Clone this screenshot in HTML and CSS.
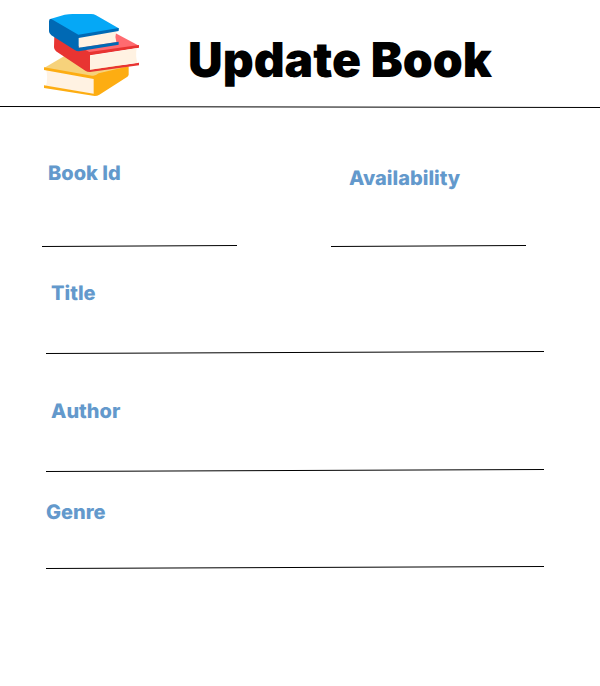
FILE: index.html
```html
<!DOCTYPE html>
<html lang="en">
<head>
<meta charset="utf-8">
<meta name="viewport" content="width=device-width, initial-scale=1">
<title>Update Book</title>
<link rel="stylesheet" href="styles.css">
</head>
<body>
<header class="header">
  <svg class="logo" viewBox="24 24 288 246" aria-hidden="true">
    <path fill="#f6d27b" d="M24 186 84 151 180 158 278 182 172 213Z"/>
    <path fill="#fff2e2" d="M30 190 174 217V264L30 240Q37 214 30 190Z"/>
    <path fill="#fdad12" d="M24 184 168 209Q178 211 188 202L278 181V206Q277 211 272 214L190 266Q184 270 176 270L24 246V238L173 263V219L24 192Z"/>
    <path fill="#ff6b70" d="M236 80 309 119 160 142 130 130Z"/>
    <path fill="#e83432" d="M55 88 60 84 160 138 309 117V125L162 148V191L309 170V178L162 198Q154 198 148 194L60 136Q54 131 54 124Z"/>
    <path fill="#fff2e2" d="M162 149 302 127Q298 150 304 170L162 191Z"/>
    <path fill="#fff2e2" d="M128 95 241 75Q236 92 241 108L128 126Z"/>
    <path fill="#05a8f6" d="M40 40 86 26Q98 24 110 24H165Q174 24 180 28L248 67V71L128 92Z"/>
    <path fill="#0069b4" d="M39 46Q39 38 46 39L127 86 248 66V75L128 96V125L248 107V116L128 136Q122 136 116 132L46 88Q39 83 39 76Z"/>
  </svg>
  <h1 class="title">Update Book</h1>
</header>
<svg class="rule rule-short" viewBox="0 0 600 2" preserveAspectRatio="none" aria-hidden="true"><path d="M0 .5 600 1.5"/></svg>

<form class="form">
  <div class="pair">
    <div class="field field-id">
      <label for="book-id">Book Id</label>
      <input id="book-id" type="text">
      <svg class="rule rule-short" viewBox="0 0 195 2" preserveAspectRatio="none" aria-hidden="true"><path d="M0 1.5 195 .5"/></svg>
    </div>
    <div class="field field-availability">
      <label for="availability">Availability</label>
      <input id="availability" type="text">
      <svg class="rule rule-short" viewBox="0 0 195 2" preserveAspectRatio="none" aria-hidden="true"><path d="M0 1.5 195 .5"/></svg>
    </div>
  </div>
  <div class="field field-title">
    <label for="title">Title</label>
    <input id="title" type="text">
    <svg class="rule rule-long" viewBox="0 0 498 3" preserveAspectRatio="none" aria-hidden="true"><path d="M0 2.5 498 .5"/></svg>
  </div>
  <div class="field field-author">
    <label for="author">Author</label>
    <input id="author" type="text">
    <svg class="rule rule-long" viewBox="0 0 498 3" preserveAspectRatio="none" aria-hidden="true"><path d="M0 2.5 498 .5"/></svg>
  </div>
  <div class="field field-genre">
    <label for="genre">Genre</label>
    <input id="genre" type="text">
    <svg class="rule rule-long" viewBox="0 0 498 3" preserveAspectRatio="none" aria-hidden="true"><path d="M0 2.5 498 .5"/></svg>
  </div>
</form>
</body>
</html>
```

FILE: styles.css
```css
* {
  box-sizing: border-box;
}

body {
  margin: 0;
  background: #fff;
  color: #000;
  font-family: Inter, "Liberation Sans", sans-serif;
  text-rendering: geometricPrecision;
}

.header {
  display: flex;
  align-items: flex-end;
  gap: 48px;
  padding: 14px 44px 10px;
}

.logo {
  display: block;
  flex: none;
  width: 96px;
  height: 82px;
}

.title {
  margin: 0;
  font-size: 48px;
  font-weight: 900;
  line-height: 72px;
  white-space: nowrap;
}

.rule {
  display: block;
  width: 100%;
  fill: none;
  stroke: #000;
  stroke-width: 1px;
}

.rule-short {
  height: 2px;
}

.rule-long {
  height: 3px;
}

.form {
  padding: 53px 56px 48px 42px;
}

.pair {
  display: grid;
  grid-template-columns: 1fr 1fr;
  align-items: end;
  column-gap: 94px;
  padding-right: 18px;
}

.field {
  display: flex;
  flex-direction: column;
}

.field label {
  color: #6399cc;
  font-size: 20px;
  font-weight: 800;
  line-height: 24px;
}

.field input {
  width: 100%;
  height: 46px;
  padding: 0 6px;
  border: 0;
  outline: 0;
  background: transparent;
  font: inherit;
  font-size: 16px;
}

.field-id label {
  padding-left: 6px;
}

.field-id input {
  height: 60px;
}

.field-availability label {
  padding-left: 18px;
}

.field-availability input {
  height: 55px;
}

.field-title,
.field-author,
.field-genre {
  margin-left: 4px;
}

.field-title {
  margin-top: 34px;
}

.field-author {
  margin-top: 45px;
}

.field-title label,
.field-author label {
  padding-left: 5px;
}

.field-genre {
  margin-top: 28px;
}

.field-genre input {
  height: 42px;
}
```
